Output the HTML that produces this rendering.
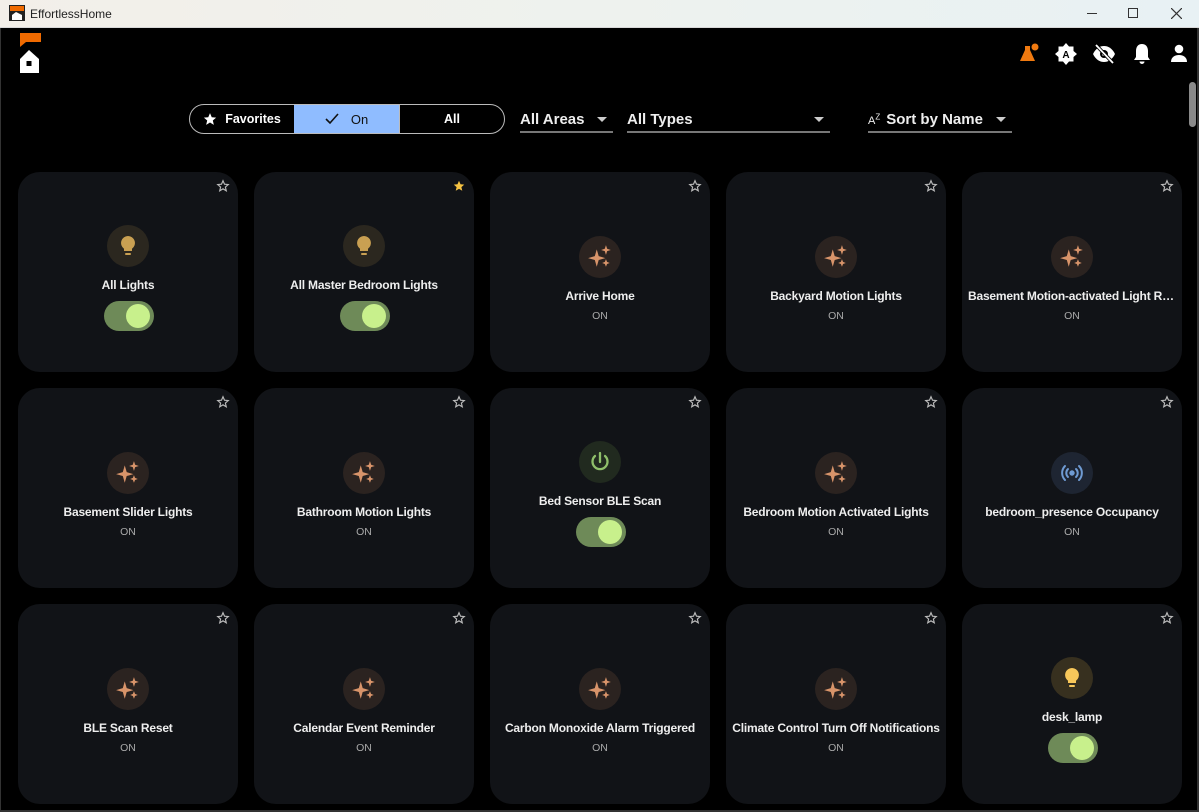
<!DOCTYPE html>
<html><head><meta charset="utf-8">
<style>
*{margin:0;padding:0;box-sizing:border-box}
body{width:1199px;height:812px;overflow:hidden;background:#000;font-family:"Liberation Sans",sans-serif;position:relative}
.tb{position:absolute;left:0;top:0;width:1199px;height:28px;background:linear-gradient(90deg,#f3efe9,#eef2ee 50%,#e8f1f4);border-bottom:1px solid #d8d8d8}
.tb .t{position:absolute;left:30px;top:7px;font-size:12px;color:#222}
.frame{position:absolute;left:0;top:28px;width:1199px;height:784px;border-left:1px solid #333;border-right:2px solid #333;border-bottom:2px solid #333}
.card{position:absolute;width:220px;height:200px;background:#111317;border-radius:22px}
.star{position:absolute;right:8px;top:7px;width:14px;height:14px}
.ic{position:absolute;left:89px;width:42px;height:42px;border-radius:50%;display:flex;align-items:center;justify-content:center}
.nm{position:absolute;left:6px;right:6px;text-align:center;color:#eee;font-weight:bold;font-size:12px;letter-spacing:-0.2px;white-space:nowrap;overflow:hidden;text-overflow:ellipsis}
.on{position:absolute;left:0;right:0;text-align:center;color:#aaa;font-size:10.5px}
.tg{position:absolute;left:86px;width:50px;height:30px;border-radius:15px;background:#6e8a58}
.tg::after{content:"";position:absolute;right:4px;top:3px;width:24px;height:24px;border-radius:50%;background:#c8f08c}
.seg{position:absolute;top:104px;height:29px;font-size:12.5px;font-weight:bold;display:flex;align-items:center;justify-content:center;color:#fff}
.dd{position:absolute;top:106px;height:27px;padding-top:5px;border-bottom:2px solid #777;color:#eee;font-size:15px;font-weight:bold}
.dd .ar{position:absolute;right:6px;top:11px;width:0;height:0;border-left:5px solid transparent;border-right:5px solid transparent;border-top:5px solid #ccc}
</style></head><body>
<div class="tb">
<svg style="position:absolute;left:9px;top:5px" width="16" height="16" viewBox="0 0 16 16"><rect width="16" height="16" fill="#222"/><rect x="1" y="1" width="14" height="5" fill="#f06a00"/><path d="M3 15V10l4-3 6 3v5z" fill="#fff"/></svg>
<div class="t">EffortlessHome</div>
<div style="position:absolute;left:1087px;top:13px;width:10px;height:1px;background:#333"></div>
<div style="position:absolute;left:1128px;top:8px;width:10px;height:10px;border:1px solid #333"></div>
<svg style="position:absolute;left:1171px;top:8px" width="11" height="11"><path d="M0 0L11 11M11 0L0 11" stroke="#333" stroke-width="1.2"/></svg>
</div>
<div class="frame"></div>
<svg style="position:absolute;left:18px;top:33px" width="24" height="42" viewBox="0 0 24 42"><path d="M2 0H23V9H8L2 14Z" fill="#f06a00"/><path d="M2 26L11 17L21 26V40H2Z" fill="#fff"/><rect x="8.5" y="28" width="5" height="5" fill="#000"/></svg>
<svg style="position:absolute;left:1019px;top:42px" width="22" height="22" viewBox="0 0 22 22"><path d="M4 4H11V8L16 19H1L6 8V4Z" fill="#f07a10"/><circle cx="16" cy="5" r="3.5" fill="#f07a10"/></svg>
<svg style="position:absolute;left:1055px;top:43px" width="22" height="22" viewBox="0 0 22 22"><path d="M11 0L14 3.5H18.5V8L22 11L18.5 14V18.5H14L11 22L8 18.5H3.5V14L0 11L3.5 8V3.5H8Z" fill="#fff"/><text x="11" y="15" text-anchor="middle" font-size="10" font-weight="bold" font-family="Liberation Sans" fill="#000">A</text></svg>
<svg style="position:absolute;left:1092px;top:44px" width="24" height="20" viewBox="0 0 24 20"><path d="M1 10C4 4 8 2 12 2S20 4 23 10C20 16 16 18 12 18S4 16 1 10Z" fill="#fff"/><circle cx="12" cy="10" r="4" fill="#000"/><circle cx="12" cy="10" r="2" fill="#fff"/><path d="M4 1L21 19" stroke="#000" stroke-width="3.5"/><path d="M4 1L21 19" stroke="#fff" stroke-width="1.8"/></svg>
<svg style="position:absolute;left:1133px;top:43px" width="18" height="22" viewBox="0 0 18 22"><path d="M9 1C5 1 3 4 3 8V14L1 17H17L15 14V8C15 4 13 1 9 1Z" fill="#fff"/><path d="M6.5 18.5A2.5 2.5 0 0 0 11.5 18.5Z" fill="#fff"/></svg>
<svg style="position:absolute;left:1170px;top:44px" width="18" height="18" viewBox="0 0 18 18"><circle cx="9" cy="5" r="4.3" fill="#fff"/><path d="M1 18C1 13 5 11 9 11S17 13 17 18Z" fill="#fff"/></svg>
<div style="position:absolute;left:1189px;top:82px;width:7px;height:45px;border-radius:4px;background:#8a8a8a"></div>
<div style="position:absolute;left:189px;top:104px;width:316px;height:30px;border:1px solid #bbb;border-radius:15px;overflow:hidden"></div>
<div class="seg" style="left:190px;width:104px"><svg width="14" height="14" viewBox="0 0 24 24" style="margin-right:8px"><path d="M12 2l3 7 7.5.6-5.7 5 1.8 7.4L12 18l-6.6 4 1.8-7.4L1.5 9.6 9 9z" fill="#fff"/></svg>Favorites</div>
<div class="seg" style="left:294px;width:105px;top:105px;height:28px;background:#8fbcff;color:#111;font-weight:normal;font-size:13px"><svg width="14" height="12" viewBox="0 0 14 12" style="margin-right:12px"><path d="M1 6L5 10L13 1" stroke="#111" stroke-width="1.6" fill="none"/></svg>On</div>
<div class="seg" style="left:399px;width:105px;border-left:1px solid #bbb">All</div>
<div class="dd" style="left:520px;width:93px">All Areas<span class="ar"></span></div>
<div class="dd" style="left:627px;width:203px">All Types<span class="ar"></span></div>
<div class="dd" style="left:868px;width:144px"><span style="font-size:11px;margin-right:6px;font-weight:normal">A<sup style="font-size:8px">Z</sup></span>Sort by Name<span class="ar"></span></div>

<svg width="0" height="0" style="position:absolute">
<defs>
<symbol id="bulb" viewBox="0 0 24 24"><path d="M12 2a7 7 0 0 0-4 12.7V17h8v-2.3A7 7 0 0 0 12 2z"/><rect x="9" y="19" width="6" height="2" rx="1"/></symbol>
<symbol id="spk" viewBox="0 0 24 24"><path d="M9 5L10.8 11.2 17 13 10.8 14.8 9 21 7.2 14.8 1 13 7.2 11.2Z"/><path d="M17.5 1L18.6 4.4 22 5.5 18.6 6.6 17.5 10 16.4 6.6 13 5.5 16.4 4.4Z"/><path d="M17.5 14L18.5 16.5 21 17.5 18.5 18.5 17.5 21 16.5 18.5 14 17.5 16.5 16.5Z"/></symbol>
<symbol id="pwr" viewBox="0 0 24 24"><path d="M12 3V12M7 6A7.5 7.5 0 1 0 17 6" fill="none" stroke-width="2.3" stroke-linecap="round"/></symbol>
<symbol id="bc" viewBox="0 0 24 24"><circle cx="12" cy="12" r="2.2"/><path d="M8 8A5.5 5.5 0 0 0 8 16M16 8A5.5 5.5 0 0 1 16 16M5 5A10 10 0 0 0 5 19M19 5A10 10 0 0 1 19 19" fill="none" stroke-width="2" stroke-linecap="round"/></symbol>
<symbol id="st" viewBox="0 0 24 24"><path d="M12 3l2.6 6 6.4.6-4.9 4.3 1.5 6.3L12 16.9l-5.6 3.3 1.5-6.3L3 9.6l6.4-.6z"/></symbol>
</defs></svg>

<div class="card" style="left:18px;top:172px"><svg class="star"><use href="#st" fill="none" stroke="#bbb" stroke-width="2"/></svg><div class="ic" style="top:53px;background:#2b271f"><svg width="24" height="24" fill="#c9a052"><use href="#bulb"/></svg></div><div class="nm" style="top:106px">All Lights</div><div class="tg" style="top:129px"></div></div>
<div class="card" style="left:254px;top:172px"><svg class="star"><use href="#st" fill="#f5c242"/></svg><div class="ic" style="top:53px;background:#2b271f"><svg width="24" height="24" fill="#c9a052"><use href="#bulb"/></svg></div><div class="nm" style="top:106px">All Master Bedroom Lights</div><div class="tg" style="top:129px"></div></div>
<div class="card" style="left:490px;top:172px"><svg class="star"><use href="#st" fill="none" stroke="#bbb" stroke-width="2"/></svg><div class="ic" style="top:64px;background:#2b2320"><svg width="26" height="26" fill="#d8946a"><use href="#spk"/></svg></div><div class="nm" style="top:117px">Arrive Home</div><div class="on" style="top:138px">ON</div></div>
<div class="card" style="left:726px;top:172px"><svg class="star"><use href="#st" fill="none" stroke="#bbb" stroke-width="2"/></svg><div class="ic" style="top:64px;background:#2b2320"><svg width="26" height="26" fill="#d8946a"><use href="#spk"/></svg></div><div class="nm" style="top:117px">Backyard Motion Lights</div><div class="on" style="top:138px">ON</div></div>
<div class="card" style="left:962px;top:172px"><svg class="star"><use href="#st" fill="none" stroke="#bbb" stroke-width="2"/></svg><div class="ic" style="top:64px;background:#2b2320"><svg width="26" height="26" fill="#d8946a"><use href="#spk"/></svg></div><div class="nm" style="top:117px">Basement Motion-activated Light Room</div><div class="on" style="top:138px">ON</div></div>

<div class="card" style="left:18px;top:388px"><svg class="star"><use href="#st" fill="none" stroke="#bbb" stroke-width="2"/></svg><div class="ic" style="top:64px;background:#2b2320"><svg width="26" height="26" fill="#d8946a"><use href="#spk"/></svg></div><div class="nm" style="top:117px">Basement Slider Lights</div><div class="on" style="top:138px">ON</div></div>
<div class="card" style="left:254px;top:388px"><svg class="star"><use href="#st" fill="none" stroke="#bbb" stroke-width="2"/></svg><div class="ic" style="top:64px;background:#2b2320"><svg width="26" height="26" fill="#d8946a"><use href="#spk"/></svg></div><div class="nm" style="top:117px">Bathroom Motion Lights</div><div class="on" style="top:138px">ON</div></div>
<div class="card" style="left:490px;top:388px"><svg class="star"><use href="#st" fill="none" stroke="#bbb" stroke-width="2"/></svg><div class="ic" style="top:53px;background:#212a1f"><svg width="24" height="24" stroke="#8fbf6a"><use href="#pwr"/></svg></div><div class="nm" style="top:106px">Bed Sensor BLE Scan</div><div class="tg" style="top:129px"></div></div>
<div class="card" style="left:726px;top:388px"><svg class="star"><use href="#st" fill="none" stroke="#bbb" stroke-width="2"/></svg><div class="ic" style="top:64px;background:#2b2320"><svg width="26" height="26" fill="#d8946a"><use href="#spk"/></svg></div><div class="nm" style="top:117px">Bedroom Motion Activated Lights</div><div class="on" style="top:138px">ON</div></div>
<div class="card" style="left:962px;top:388px"><svg class="star"><use href="#st" fill="none" stroke="#bbb" stroke-width="2"/></svg><div class="ic" style="top:64px;background:#1e2532"><svg width="24" height="24" fill="#6f9bd3" stroke="#6f9bd3"><use href="#bc"/></svg></div><div class="nm" style="top:117px">bedroom_presence Occupancy</div><div class="on" style="top:138px">ON</div></div>

<div class="card" style="left:18px;top:604px"><svg class="star"><use href="#st" fill="none" stroke="#bbb" stroke-width="2"/></svg><div class="ic" style="top:64px;background:#2b2320"><svg width="26" height="26" fill="#d8946a"><use href="#spk"/></svg></div><div class="nm" style="top:117px">BLE Scan Reset</div><div class="on" style="top:138px">ON</div></div>
<div class="card" style="left:254px;top:604px"><svg class="star"><use href="#st" fill="none" stroke="#bbb" stroke-width="2"/></svg><div class="ic" style="top:64px;background:#2b2320"><svg width="26" height="26" fill="#d8946a"><use href="#spk"/></svg></div><div class="nm" style="top:117px">Calendar Event Reminder</div><div class="on" style="top:138px">ON</div></div>
<div class="card" style="left:490px;top:604px"><svg class="star"><use href="#st" fill="none" stroke="#bbb" stroke-width="2"/></svg><div class="ic" style="top:64px;background:#2b2320"><svg width="26" height="26" fill="#d8946a"><use href="#spk"/></svg></div><div class="nm" style="top:117px">Carbon Monoxide Alarm Triggered</div><div class="on" style="top:138px">ON</div></div>
<div class="card" style="left:726px;top:604px"><svg class="star"><use href="#st" fill="none" stroke="#bbb" stroke-width="2"/></svg><div class="ic" style="top:64px;background:#2b2320"><svg width="26" height="26" fill="#d8946a"><use href="#spk"/></svg></div><div class="nm" style="top:117px">Climate Control Turn Off Notifications</div><div class="on" style="top:138px">ON</div></div>
<div class="card" style="left:962px;top:604px"><svg class="star"><use href="#st" fill="none" stroke="#bbb" stroke-width="2"/></svg><div class="ic" style="top:53px;background:#37301f"><svg width="24" height="24" fill="#f7c75a"><use href="#bulb"/></svg></div><div class="nm" style="top:106px">desk_lamp</div><div class="tg" style="top:129px"></div></div>
</body></html>
